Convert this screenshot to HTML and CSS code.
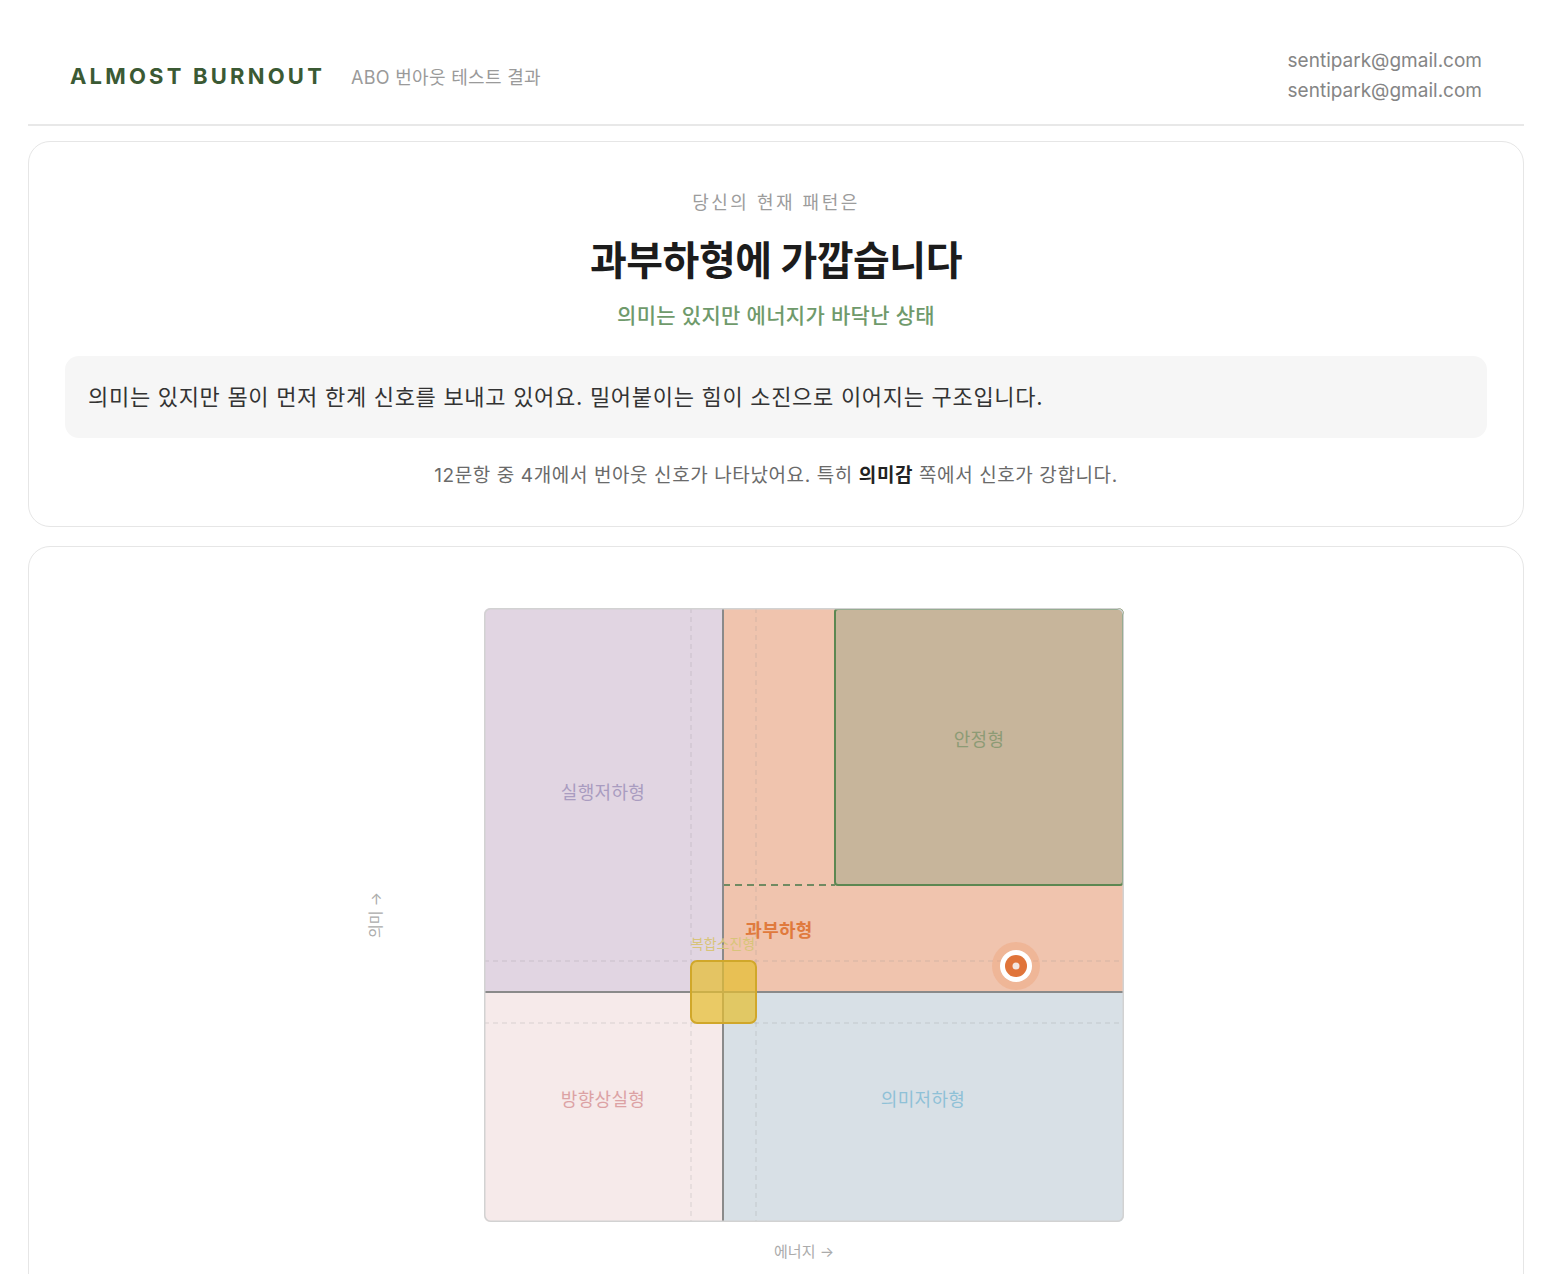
FILE: index.html
```html
<!DOCTYPE html>
<html lang="ko">

<head>
	<meta charset="UTF-8">
	<title>ABO 번아웃 테스트 결과</title>
	<link rel="stylesheet" href="styles.css">
</head>

<body>
	<div class="page">
		<header class="topbar">
			<div class="brand">
				<span class="logo">ALMOST BURNOUT</span>
				<span class="brand-sub">ABO 번아웃 테스트 결과</span>
			</div>
			<div class="account">
				<span>sentipark@gmail.com</span>
				<span>sentipark@gmail.com</span>
			</div>
		</header>

		<main>
			<section class="card result">
				<p class="kicker">당신의 현재 패턴은</p>
				<h1 class="result-title">과부하형에 가깝습니다</h1>
				<p class="result-sub">의미는 있지만 에너지가 바닥난 상태</p>
				<div class="result-box">의미는 있지만 몸이 먼저 한계 신호를 보내고 있어요. 밀어붙이는 힘이 소진으로 이어지는 구조입니다.</div>
				<p class="result-note">12문항 중 4개에서 번아웃 신호가 나타났어요. 특히 <b>의미감</b> 쪽에서 신호가 강합니다.</p>
			</section>

			<section class="card chart-card">
				<div class="chart">
					<svg class="plot" width="640" height="614" viewBox="0 0 640 614">
						<defs>
							<clipPath id="plot-clip">
								<rect x="0" y="0" width="640" height="614" rx="6" />
							</clipPath>
						</defs>
						<g clip-path="url(#plot-clip)">
							<!-- 사분면 -->
							<rect class="q-low-action" x="0" y="0" width="239" height="384" />
							<rect class="q-overload" x="239" y="0" width="401" height="384" />
							<rect class="q-lost" x="0" y="384" width="239" height="230" />
							<rect class="q-low-meaning" x="239" y="384" width="401" height="230" />

							<!-- 보조선 -->
							<line class="guide" x1="207" y1="0" x2="207" y2="614" />
							<line class="guide" x1="272" y1="0" x2="272" y2="614" />
							<line class="guide" x1="0" y1="353" x2="640" y2="353" />
							<line class="guide" x1="0" y1="415" x2="640" y2="415" />

							<!-- 안정형 -->
							<rect class="stable" x="351" y="1" width="288" height="276" rx="3" />
							<line class="stable-dash" x1="239" y1="277" x2="351" y2="277" />

							<!-- 축 -->
							<line class="axis" x1="239" y1="0" x2="239" y2="614" />
							<line class="axis" x1="0" y1="384" x2="640" y2="384" />

							<!-- 복합소진형 -->
							<rect class="mixed" x="207" y="353" width="65" height="62" rx="6" />
						</g>
						<rect class="frame" x="0.75" y="0.75" width="638.5" height="612.5" rx="6" />

						<text class="zone zone-action" x="119" y="191">실행저하형</text>
						<text class="zone zone-stable" x="495" y="138">안정형</text>
						<text class="zone zone-over" x="295" y="329">과부하형</text>
						<text class="zone zone-mixed" x="239" y="341">복합소진형</text>
						<text class="zone zone-lost" x="119" y="498">방향상실형</text>
						<text class="zone zone-meaning" x="439" y="498">의미저하형</text>

						<!-- 내 위치 -->
						<circle class="me-halo" cx="532" cy="358" r="24" />
						<circle class="me-ring" cx="532" cy="358" r="16" />
						<circle class="me-dot" cx="532" cy="358" r="11" />
						<circle class="me-core" cx="532" cy="358" r="3.5" />
					</svg>
					<span class="axis-label axis-y">의미 →</span>
					<span class="axis-label axis-x">에너지 →</span>
				</div>
			</section>
		</main>
	</div>
</body>

</html>
```

FILE: styles.css
```css
body {
	margin: 0;
	background-color: #ffffff;
	font-family: "Inter", "Noto Sans CJK KR", sans-serif;
	color: #222;
}

.page {
	padding: 0 24px 0 28px;
}

/* 상단 바 */
.topbar {
	display: flex;
	justify-content: space-between;
	align-items: center;
	padding: 45px 42px 18px;
	border-bottom: 2px solid #e8e8e8;
}

.brand {
	display: flex;
	align-items: baseline;
	gap: 26px;
	padding-top: 1px;
}

.logo {
	font-size: 22px;
	font-weight: 700;
	letter-spacing: 3.2px;
	color: #3b5a34;
}

.brand-sub {
	font-size: 18px;
	letter-spacing: 0.3px;
	color: #9a9a9a;
}

.account {
	display: flex;
	flex-direction: column;
	align-items: flex-end;
	padding-top: 1px;
	font-size: 19px;
	line-height: 30px;
	color: #858585;
}

/* 카드 */
.card {
	border: 1px solid #e6e6e6;
	border-radius: 22px;
	background-color: #fff;
}

.result {
	margin-top: 15px;
	padding: 48px 36px 37px;
	text-align: center;
}

.kicker {
	margin: 0;
	font-size: 18px;
	line-height: 26px;
	letter-spacing: 2.5px;
	color: #9c9c9c;
}

.result-title {
	margin: 19px 0 0;
	font-size: 40px;
	line-height: 52px;
	font-weight: 700;
	color: #1c1c1c;
	letter-spacing: -0.5px;
}

.result-sub {
	margin: 15px 0 0;
	font-size: 21px;
	line-height: 28px;
	font-weight: 500;
	letter-spacing: 0.3px;
	color: #6f9a6b;
}

.result-box {
	margin-top: 26px;
	padding: 26px 23px;
	background-color: #f6f6f6;
	border-radius: 14px;
	text-align: left;
	font-size: 22px;
	line-height: 30px;
	letter-spacing: 0.7px;
	color: #333;
}

.result-note {
	margin: 25px 0 0;
	font-size: 19px;
	line-height: 26px;
	letter-spacing: 0.6px;
	color: #6a6a6a;
}

.result-note b {
	color: #222;
}

/* 차트 */
.chart-card {
	margin-top: 19px;
	padding: 61px 0 120px;
	display: flex;
	justify-content: center;
}

.chart {
	position: relative;
	margin-left: 56px;
	width: 640px;
	height: 614px;
}

.plot {
	display: block;
	overflow: visible;
}

.q-low-action {
	fill: #e1d5e2;
}

.q-overload {
	fill: #f0c4ae;
}

.q-lost {
	fill: #f6eaea;
}

.q-low-meaning {
	fill: #d8e0e6;
}

.guide {
	stroke: rgba(140, 140, 140, 0.28);
	stroke-width: 1;
	stroke-dasharray: 5 4;
}

.stable {
	fill: #c7b59b;
	stroke: #5c8752;
	stroke-width: 2;
}

.stable-dash {
	stroke: #708a62;
	stroke-width: 2;
	stroke-dasharray: 7 5;
}

.axis {
	stroke: #8a8a8a;
	stroke-width: 2;
}

.mixed {
	fill: rgba(228, 190, 50, 0.72);
	stroke: #d0a72a;
	stroke-width: 2;
}

.frame {
	fill: none;
	stroke: #d2d2d2;
	stroke-width: 1.5;
}

.zone {
	font-family: "Noto Sans CJK KR", sans-serif;
	font-size: 18px;
	letter-spacing: 0.3px;
	text-anchor: middle;
}

.zone-action {
	fill: #a99cc0;
}

.zone-stable {
	fill: #8d9b75;
}

.zone-over {
	fill: #e07a3d;
	font-weight: 700;
}

.zone-mixed {
	fill: #d8c47a;
	font-size: 14px;
	letter-spacing: 0;
}

.zone-lost {
	fill: #dca2a4;
}

.zone-meaning {
	fill: #8fc1d7;
}

.me-halo {
	fill: rgba(240, 150, 100, 0.3);
}

.me-ring {
	fill: #ffffff;
}

.me-dot {
	fill: #e0743a;
}

.me-core {
	fill: #f3e6e0;
}

.axis-label {
	position: absolute;
	font-size: 15px;
	color: #ababab;
	white-space: nowrap;
}

.axis-x {
	left: 50%;
	top: 632px;
	transform: translateX(-50%);
}

.axis-y {
	left: -110px;
	top: 307px;
	transform: translate(-50%, -50%) rotate(-90deg);
}
```
